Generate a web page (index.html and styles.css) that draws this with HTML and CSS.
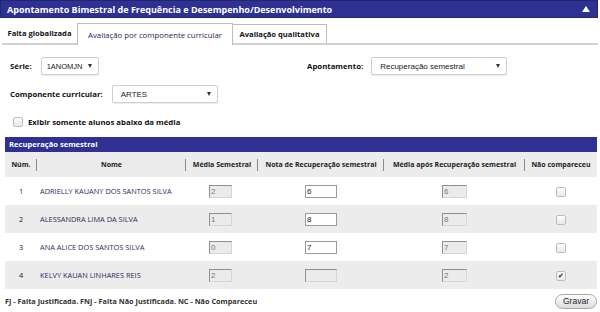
FILE: index.html
```html
<!DOCTYPE html>
<html lang="pt-BR">
<head>
  <meta charset="UTF-8">
  <title>Apontamento Bimestral</title>
  <link rel="stylesheet" href="styles.css">
</head>
<body>
  <div class="panel">
    <div class="title-bar">
      <span>Apontamento Bimestral de Frequência e Desempenho/Desenvolvimento</span>
      <span class="collapse"></span>
    </div>

    <div class="tabs">
      <div class="tab">Falta globalizada</div>
      <div class="tab active">Avaliação por componente curricular</div>
      <div class="tab boxed">Avaliação qualitativa</div>
    </div>

    <div class="form-row first">
      <div class="field left">
        <label>Série:</label>
        <div class="select serie"><span>1ANOMJN</span><i></i></div>
      </div>
      <div class="field">
        <label class="apont-label">Apontamento:</label>
        <div class="select apont"><span>Recuperação semestral</span><i></i></div>
      </div>
    </div>

    <div class="form-row">
      <div class="field">
        <label>Componente curricular:</label>
        <div class="select comp"><span>ARTES</span><i></i></div>
      </div>
    </div>

    <div class="check-row">
      <span class="box"></span>
      <label>Exibir somente alunos abaixo da média</label>
    </div>

    <div class="section">
      <div class="section-title">Recuperação semestral</div>
      <table class="grid">
        <thead>
          <tr>
            <th class="c-num sep">Núm.</th>
            <th class="c-nome sep">Nome</th>
            <th class="c-media sep">Média Semestral</th>
            <th class="c-nota sep">Nota de Recuperação semestral</th>
            <th class="c-apos sep">Média após Recuperação semestral</th>
            <th class="c-nc">Não compareceu</th>
          </tr>
        </thead>
        <tbody>
          <tr>
            <td class="num">1</td>
            <td class="nome">ADRIELLY KAUANY DOS SANTOS SILVA</td>
            <td><span class="input ro small">2</span></td>
            <td><span class="input edit">6</span></td>
            <td><span class="input ro">6</span></td>
            <td><span class="box"></span></td>
          </tr>
          <tr class="alt">
            <td class="num">2</td>
            <td class="nome">ALESSANDRA LIMA DA SILVA</td>
            <td><span class="input ro small">1</span></td>
            <td><span class="input edit">8</span></td>
            <td><span class="input ro">8</span></td>
            <td><span class="box"></span></td>
          </tr>
          <tr>
            <td class="num">3</td>
            <td class="nome">ANA ALICE DOS SANTOS SILVA</td>
            <td><span class="input ro small">0</span></td>
            <td><span class="input edit">7</span></td>
            <td><span class="input ro">7</span></td>
            <td><span class="box"></span></td>
          </tr>
          <tr class="alt">
            <td class="num">4</td>
            <td class="nome">KELVY KAUAN LINHARES REIS</td>
            <td><span class="input ro small">2</span></td>
            <td><span class="input ro wide"></span></td>
            <td><span class="input ro">2</span></td>
            <td><span class="box checked">&#10004;</span></td>
          </tr>
        </tbody>
      </table>

      <div class="footer">
        <span>FJ - Falta Justificada. FNJ - Falta Não Justificada. NC - Não Compareceu</span>
        <button class="btn">Gravar</button>
      </div>
    </div>
  </div>
</body>
</html>
```

FILE: styles.css
```css
body { margin: 0; font-family: "Open Sans", "Liberation Sans", sans-serif; color: #222; background: #fff; }
.panel { width: 598px; }

.title-bar { height: 16px; background: #2e3192; border: 1px solid #23266f; color: #fff; font-weight: bold; font-size: 9px; display: flex; align-items: center; justify-content: space-between; padding: 0 6px 0 6px; }
.collapse { width: 0; height: 0; border-left: 4px solid transparent; border-right: 4px solid transparent; border-bottom: 6px solid #fff; margin-right: 1px; }

.tabs { display: flex; margin-top: 5px; margin-left: 2px; height: 20px; border-bottom: 2px solid #d0d0d0; align-items: flex-end; }
.tab { flex: none; white-space: nowrap; height: 20px; display: flex; align-items: center; justify-content: center; padding: 0; font-size: 7.6px; font-weight: bold; color: #111; box-sizing: border-box; }
.tab:first-child { width: 75px; }
.tab.active { border: 1px solid #bdbdbd; border-bottom: none; font-weight: normal; color: #22245a; height: 22px; width: 156px; font-size: 7.8px; background: #fff; margin-bottom: -2px; }
.tab.boxed { border: 1px solid #bdbdbd; border-left: none; border-bottom: none; height: 19px; width: 94px; }

.form-row { display: flex; align-items: center; margin-left: 10px; height: 18px; }
.form-row.first { margin-top: 12px; margin-bottom: 10px; }
.field { display: flex; align-items: center; }
.field.left { width: 297px; }
.field label { font-size: 7.8px; font-weight: bold; color: #111; margin-right: 9px; }
.field label.apont-label { margin-right: 8px; }
.select { height: 18px; box-sizing: border-box; border: 1px solid #cfcfcf; border-radius: 2px; background: #fff; display: flex; align-items: center; justify-content: space-between; padding: 0 6px 0 8px; font-family: "Liberation Sans", Arial, sans-serif; font-size: 8px; color: #222; box-shadow: 0 1px 1px rgba(0,0,0,0.08); }
.select i { width: 0; height: 0; border-left: 2.5px solid transparent; border-right: 2.5px solid transparent; border-top: 4px solid #333; }
.select.serie { width: 58px; padding-left: 5px; font-size: 7.5px; }
.select.apont { width: 136px; }
.select.comp { width: 106px; }

.check-row { display: flex; align-items: center; margin: 13px 0 0 13px; height: 12px; }
.check-row label { font-size: 7.8px; font-weight: bold; color: #111; margin-left: 5px; }

.box { display: inline-block; width: 8px; height: 8px; border: 1px solid #bdbdbd; border-radius: 2px; background: linear-gradient(#fdfdfd, #e9e9e9); vertical-align: middle; font-size: 7px; line-height: 8px; text-align: center; color: #222; }

.section { margin: 9px 0 0 5px; width: 592px; }
.section-title { height: 15px; background: #2e3192; color: #fff; font-weight: bold; font-size: 7.6px; line-height: 15px; padding-left: 4px; }

.grid { width: 592px; border-collapse: collapse; table-layout: fixed; }
.grid th { height: 25px; background: #ececec; font-size: 7px; font-weight: bold; color: #222; padding: 0; text-align: center; }
.grid th.sep { background: #ececec linear-gradient(#8a8a8a, #8a8a8a) no-repeat right center / 1px 12px; }
.c-num { width: 32px; }
.c-nome { width: 149px; }
.c-media { width: 72px; }
.c-nota { width: 126px; }
.c-apos { width: 141px; }
.c-nc { width: 72px; }

.grid td { height: 28px; padding: 0; text-align: center; font-size: 7.4px; }
.grid tr.alt td { background: #ececec; }
.grid td.num { color: #222; }
.grid td.nome { text-align: left; padding-left: 3px; color: #2b2b5e; }

.input { display: inline-block; vertical-align: middle; box-sizing: border-box; height: 13px; width: 25px; text-align: left; font-family: "Liberation Sans", Arial, sans-serif; font-size: 8px; line-height: 11px; padding-left: 1px; color: #222; }
.input.ro { background: #ebebeb; border: 1px solid #d5d5d5; border-top-color: #8f8f8f; border-left-color: #8f8f8f; color: #777; }
.input.ro.small { width: 23px; margin-left: -3px; }
.input.edit { background: #fff; border: 1px solid #9a9a9a; width: 32px; }
.input.wide { width: 32px; }

.footer { display: flex; justify-content: space-between; align-items: center; height: 24px; }
.footer span { font-size: 7.3px; font-weight: bold; color: #333; }
.btn { width: 42px; height: 15px; border: 1px solid #a8a8a8; border-radius: 8px; background: linear-gradient(#ffffff, #dcdcdc); font-family: "Liberation Sans", Arial, sans-serif; font-size: 8.5px; color: #222; padding: 0; }
```
